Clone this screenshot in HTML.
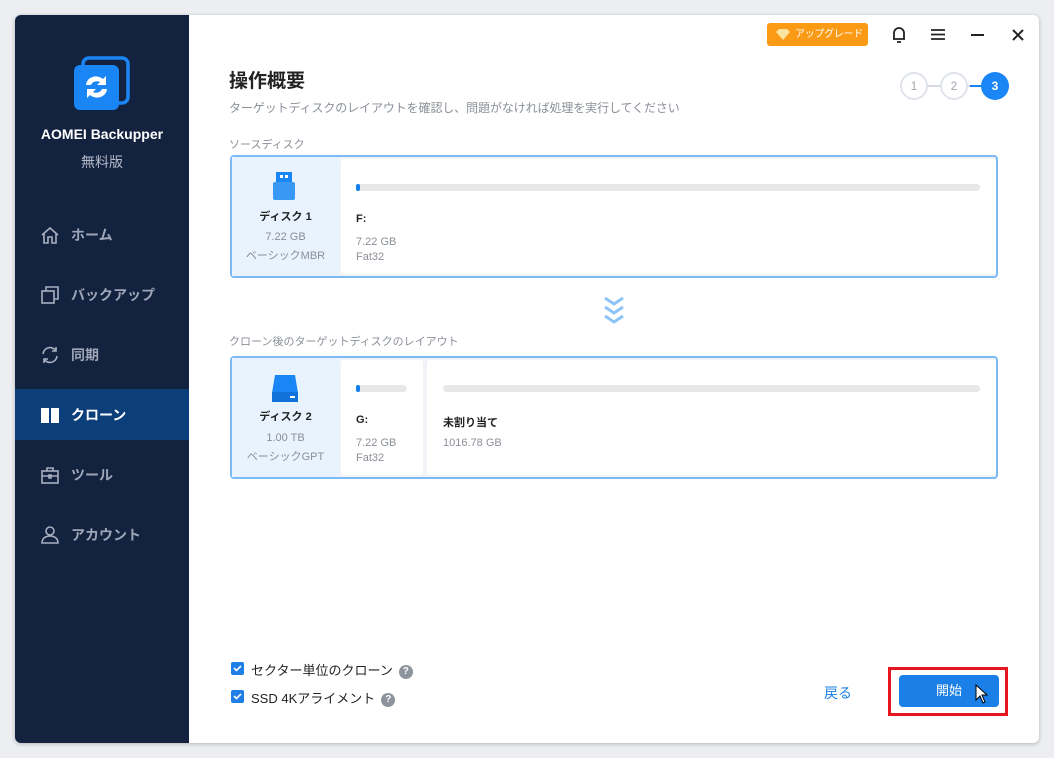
<!DOCTYPE html>
<html><head><meta charset="utf-8"><style>
*{margin:0;padding:0;box-sizing:border-box}
body{width:1054px;height:758px;background:#eceef2;position:relative;overflow:hidden;font-family:"Liberation Sans","Noto Sans CJK JP",sans-serif}
.win{position:absolute;left:15px;top:15px;width:1024px;height:728px;background:#fff;border-radius:6px;overflow:hidden;box-shadow:0 1px 4px rgba(0,0,0,.25)}
.side{position:absolute;left:0;top:0;width:174px;height:728px;background:#13223f}
.abs{position:absolute}
.nav{position:absolute;left:0;width:174px;height:51px;color:#9ea6b8;font-size:14px;font-weight:bold;display:flex;align-items:center}
.nav svg{position:absolute;left:25px}
.nav span{position:absolute;left:56px}
.t{position:absolute;white-space:nowrap}
.box{position:absolute;left:215px;width:768px;border:2px solid #7dbaf5;border-radius:4px;background:#f1f3f6}
.dk{position:absolute;left:0;top:0;width:107px;height:100%;background:#e8f3fe;text-align:center}
.pt{position:absolute;top:2px;background:#fff;border-radius:3px}
.bar{position:absolute;height:7px;background:#e8e8e8;border-radius:4px}
.bar i{position:absolute;left:0;top:0;width:4px;height:7px;background:#1080f0;border-radius:3px}
.g{color:#8a8f98;font-size:11px}
.cb{position:absolute;width:13px;height:13px;background:#1f7fe6;border-radius:2px}
.q{display:inline-block;width:14px;height:14px;border-radius:50%;background:#8e949d;color:#fff;font-size:10px;text-align:center;line-height:14px;font-weight:bold;vertical-align:1px;margin-left:6px}
</style></head><body>
<div class="win">
<div class="side">
 <svg class="abs" style="left:58px;top:40px" width="58" height="58" viewBox="0 0 58 58"><rect x="10" y="3" width="45" height="45" rx="6" fill="none" stroke="#1a86f5" stroke-width="3.5"/><rect x="1" y="10" width="45" height="45" rx="6" fill="#1a86f5"/><path d="M13 30 a10 9 0 0 1 17-6 l3-3 v9 h-9 l3-3 a6 5 0 0 0-9 3z M34 34 a10 9 0 0 1-17 6 l-3 3 v-9 h9 l-3 3 a6 5 0 0 0 9-3z" fill="#fff"/></svg>
 <div class="t" style="left:0;width:174px;text-align:center;top:111px;color:#fff;font-size:14px;font-weight:bold">AOMEI Backupper</div>
 <div class="t" style="left:0;width:174px;text-align:center;top:137px;color:#b4bac8;font-size:14px">無料版</div>
 <div class="nav" style="top:194px"><svg width="20" height="20" viewBox="0 0 20 20" fill="none" stroke="#a8b0c0" stroke-width="1.6"><path d="M2 10 L10 3 L18 10 M4 8 V18 H8 V12 H12 V18 H16 V8"/></svg><span>ホーム</span></div>
 <div class="nav" style="top:254px"><svg width="20" height="20" viewBox="0 0 20 20" fill="none" stroke="#a8b0c0" stroke-width="1.6"><rect x="2" y="6" width="12" height="12"/><path d="M6 6V2h12v12h-4"/></svg><span>バックアップ</span></div>
 <div class="nav" style="top:314px"><svg width="20" height="20" viewBox="0 0 20 20" fill="none" stroke="#a8b0c0" stroke-width="1.6"><path d="M3 9a7 7 0 0 1 13-3M17 11a7 7 0 0 1-13 3M16 2v4h-4M4 18v-4h4"/></svg><span>同期</span></div>
 <div class="nav" style="top:374px;background:#0c3f7a;color:#fff"><svg width="20" height="20" viewBox="0 0 20 20"><path d="M1 3h8v15H1zM11 3h8v15h-8z" fill="#fff"/></svg><span>クローン</span></div>
 <div class="nav" style="top:434px"><svg width="20" height="20" viewBox="0 0 20 20" fill="none" stroke="#a8b0c0" stroke-width="1.6"><rect x="2" y="6" width="16" height="12"/><path d="M7 6V3h6v3M2 11h16M9 10h2v3H9z"/></svg><span>ツール</span></div>
 <div class="nav" style="top:494px"><svg width="20" height="20" viewBox="0 0 20 20" fill="none" stroke="#a8b0c0" stroke-width="1.6"><circle cx="10" cy="6" r="4"/><path d="M2 18c0-5 4-7 8-7s8 2 8 7z"/></svg><span>アカウント</span></div>
</div>

<div class="abs" style="left:752px;top:8px;width:101px;height:23px;background:#fb9a14;border-radius:3px;color:#fff;font-size:10px;line-height:23px;padding-left:28px;white-space:nowrap;letter-spacing:-0.3px">アップグレード<svg class="abs" style="left:9px;top:6px" width="14" height="11" viewBox="0 0 14 11"><path d="M3 0h8l3 3-7 8-7-8z" fill="#fde3a0"/></svg></div>
<svg class="abs" style="left:876px;top:11px" width="16" height="18" viewBox="0 0 16 18" fill="none" stroke="#222" stroke-width="1.8"><path d="M3 13V7a5 5 0 0 1 10 0v6H2h12M6 16h4"/></svg>
<svg class="abs" style="left:916px;top:13px" width="14" height="13" stroke="#222" stroke-width="1.8"><path d="M0 2h14M0 6.5h14M0 11h14"/></svg>
<svg class="abs" style="left:956px;top:19px" width="13" height="2"><rect width="13" height="2" fill="#222"/></svg>
<svg class="abs" style="left:997px;top:14px" width="12" height="12" stroke="#222" stroke-width="2"><path d="M1 1l10 10M11 1L1 11"/></svg>

<div class="t" style="left:214px;top:51px;font-size:19px;font-weight:bold;color:#222">操作概要</div>
<div class="t" style="left:214px;top:84px;font-size:12px;color:#8a8f98;letter-spacing:-0.1px">ターゲットディスクのレイアウトを確認し、問題がなければ処理を実行してください</div>
<div class="abs" style="left:898px;top:70px;width:80px;height:2px;background:#d6dbe3"></div>
<div class="abs" style="left:955px;top:70px;width:20px;height:2px;background:#1a86f5"></div>
<div class="abs" style="left:885px;top:57px;width:28px;height:28px;border:2px solid #dfe3ea;border-radius:50%;background:#fff;color:#a0a6b0;font-size:12px;text-align:center;line-height:24px">1</div>
<div class="abs" style="left:925px;top:57px;width:28px;height:28px;border:2px solid #dfe3ea;border-radius:50%;background:#fff;color:#a0a6b0;font-size:12px;text-align:center;line-height:24px">2</div>
<div class="abs" style="left:966px;top:57px;width:28px;height:28px;border-radius:50%;background:#1a86f5;color:#fff;font-size:12px;font-weight:bold;text-align:center;line-height:28px">3</div>

<div class="t" style="left:214px;top:121px;font-size:11px;color:#8a8f98">ソースディスク</div>
<div class="box" style="top:140px;height:123px">
 <div class="dk"><svg class="abs" style="left:40px;top:15px" width="24" height="28" viewBox="0 0 24 28"><rect x="4" y="0" width="16" height="12" fill="#1a86f5"/><rect x="8" y="3" width="3" height="3" fill="#fff"/><rect x="13" y="3" width="3" height="3" fill="#fff"/><rect x="1" y="10" width="22" height="18" rx="2" fill="#3a98f5"/></svg>
 <div class="t" style="left:0;width:107px;top:51px;font-size:11px;font-weight:bold;color:#222">ディスク 1</div>
 <div class="t g" style="left:0;width:107px;top:74px">7.22 GB</div>
 <div class="t g" style="left:0;width:107px;top:90px">ベーシックMBR</div></div>
 <div class="pt" style="left:109px;width:655px;height:115px">
 <div class="bar" style="left:15px;top:25px;width:624px"><i></i></div>
 <div class="t" style="left:15px;top:54px;font-size:11px;font-weight:bold;color:#222">F:</div>
 <div class="t g" style="left:15px;top:77px">7.22 GB</div>
 <div class="t g" style="left:15px;top:92px">Fat32</div></div>
</div>

<svg class="abs" style="left:588px;top:281px" width="22" height="30" viewBox="0 0 22 30" fill="none" stroke="#8cc4f8" stroke-width="3"><path d="M2 2l9 6 9-6M2 11l9 6 9-6M2 20l9 6 9-6"/></svg>

<div class="t" style="left:214px;top:318px;font-size:11px;color:#8a8f98">クローン後のターゲットディスクのレイアウト</div>
<div class="box" style="top:341px;height:123px">
 <div class="dk"><svg class="abs" style="left:38px;top:15px" width="30" height="30" viewBox="0 0 30 30"><path d="M5 2h20l3 18H2z" fill="#1a86f5"/><rect x="2" y="19" width="26" height="10" fill="#1272dc"/><rect x="20" y="23" width="5" height="2" fill="#fff"/></svg>
 <div class="t" style="left:0;width:107px;top:50px;font-size:11px;font-weight:bold;color:#222">ディスク 2</div>
 <div class="t g" style="left:0;width:107px;top:74px">1.00 TB</div>
 <div class="t g" style="left:0;width:107px;top:90px">ベーシックGPT</div></div>
 <div class="pt" style="left:109px;width:82px;height:115px">
 <div class="bar" style="left:15px;top:25px;width:51px"><i></i></div>
 <div class="t" style="left:15px;top:54px;font-size:11px;font-weight:bold;color:#222">G:</div>
 <div class="t g" style="left:15px;top:77px">7.22 GB</div>
 <div class="t g" style="left:15px;top:92px">Fat32</div></div>
 <div class="pt" style="left:195px;width:569px;height:115px">
 <div class="bar" style="left:16px;top:25px;width:537px"></div>
 <div class="t" style="left:16px;top:54px;font-size:11px;font-weight:bold;color:#222">未割り当て</div>
 <div class="t g" style="left:16px;top:77px">1016.78 GB</div></div>
</div>

<div class="cb" style="left:216px;top:647px"></div><svg class="abs" style="left:218px;top:650px" width="9" height="7" fill="none" stroke="#fff" stroke-width="1.6"><path d="M1 3l2.5 2.5L8 1"/></svg>
<div class="t" style="left:236px;top:645px;font-size:13px;color:#222">セクター単位のクローン<span class="q">?</span></div>
<div class="cb" style="left:216px;top:675px"></div><svg class="abs" style="left:218px;top:678px" width="9" height="7" fill="none" stroke="#fff" stroke-width="1.6"><path d="M1 3l2.5 2.5L8 1"/></svg>
<div class="t" style="left:236px;top:673px;font-size:13px;color:#222">SSD 4Kアライメント<span class="q">?</span></div>

<div class="t" style="left:809px;top:668px;font-size:14px;color:#1a7fe6">戻る</div>
<div class="abs" style="left:873px;top:652px;width:120px;height:49px;border:3px solid #e8141e"></div>
<div class="abs" style="left:884px;top:660px;width:100px;height:32px;background:#1a7fe6;border-radius:4px;color:#fff;font-size:13px;text-align:center;line-height:32px">開始</div>
<svg class="abs" style="left:960px;top:669px" width="13" height="20" viewBox="0 0 13 20"><path d="M1 1v15l4-4 3 7 2-1-3-7h5z" fill="#fff" stroke="#000" stroke-width="1"/></svg>
</div>
</body></html>
